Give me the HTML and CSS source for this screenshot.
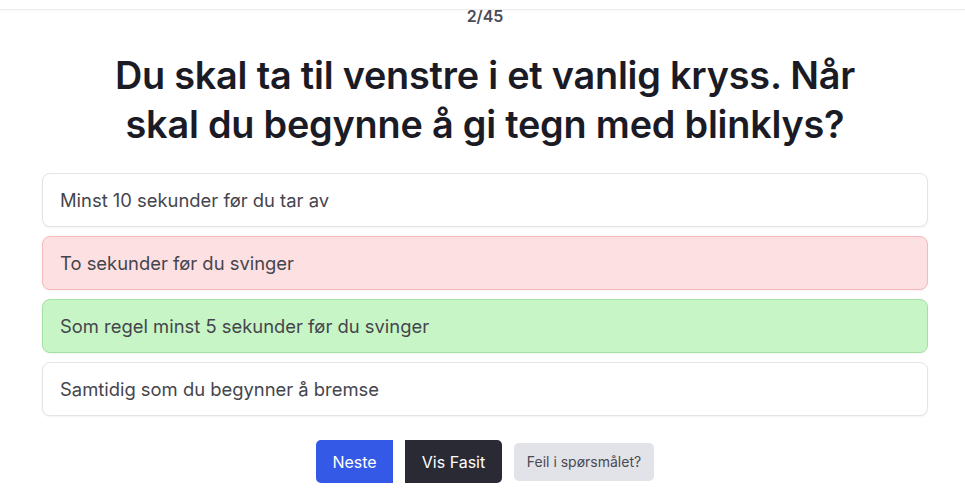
FILE: index.html
```html
<!doctype html>
<html>
  <head>
    <meta charset="UTF-8" />
    <title>Teoriprøve</title>
    <link rel="stylesheet" href="styles.css">
  </head>
  <body>
    <div class="topbar"></div>
    <main class="quiz">
      <div class="counter">2/45</div>
      <h1 class="question">Du skal ta til venstre i et vanlig kryss. Når skal du begynne å gi tegn med blinklys?</h1>

      <div class="options">
        <button class="option">Minst 10 sekunder før du tar av</button>
        <button class="option wrong">To sekunder før du svinger</button>
        <button class="option right">Som regel minst 5 sekunder før du svinger</button>
        <button class="option">Samtidig som du begynner å bremse</button>
      </div>

      <div class="actions">
        <button class="btn btn-next">Neste</button>
        <button class="btn btn-answer">Vis Fasit</button>
        <button class="btn btn-report">Feil i spørsmålet?</button>
      </div>
    </main>
  </body>
</html>
```

FILE: styles.css
```css
:root {
  --text: #45454d;
  --heading: #1b1b25;
  --border: #e4e4e7;
  --blue: #3459e6;
  --dark: #2a2a35;
  --muted: #e2e3e8;
}

* {
  margin: 0;
  padding: 0;
  box-sizing: border-box;
}

body {
  font-family: Inter, 'Noto Sans', sans-serif;
  background-color: #fff;
  color: var(--text);
}

.topbar {
  height: 10px;
  border-bottom: 1px solid #ececee;
  box-shadow: 0 1px 2px rgba(0, 0, 0, 0.04);
}

.quiz {
  padding: 0 37px 0 42px;
  display: flex;
  flex-direction: column;
  align-items: center;
}

.counter {
  font-size: 16px;
  font-weight: 600;
  color: #4b4b57;
  line-height: 14px;
  margin-top: -1px;
}

.question {
  font-size: 37.8px;
  font-weight: 600;
  line-height: 49px;
  color: var(--heading);
  text-align: center;
  max-width: 780px;
  margin: 28px 0 24px;
  letter-spacing: -0.2px;
}

.options {
  width: 100%;
  display: flex;
  flex-direction: column;
  gap: 9px;
}

.option {
  font-family: inherit;
  text-align: left;
  height: 54px;
  padding: 0 17px;
  font-size: 18.4px;
  color: var(--text);
  background-color: #fff;
  border: 1px solid var(--border);
  border-radius: 8px;
  box-shadow: 0 1px 2px rgba(0, 0, 0, 0.05);
  cursor: pointer;
}

.option.wrong {
  background-color: #fde0e1;
  border-color: #f7b9ba;
}

.option.right {
  background-color: #c8f5c6;
  border-color: #a3e0a1;
}

.actions {
  display: flex;
  align-items: center;
  gap: 12px;
  margin-top: 24px;
}

.btn {
  font-family: inherit;
  border: none;
  cursor: pointer;
  color: #fff;
  font-size: 16px;
  height: 43px;
}

.btn-next {
  background-color: var(--blue);
  border-radius: 5px 0 0 5px;
  width: 77px;
}

.btn-answer {
  background-color: var(--dark);
  width: 97px;
  border-radius: 0 5px 5px 0;
}

.btn-report {
  background-color: var(--muted);
  color: #4a4a55;
  font-size: 14px;
  height: 38px;
  width: 140px;
  border-radius: 5px;
}
```
